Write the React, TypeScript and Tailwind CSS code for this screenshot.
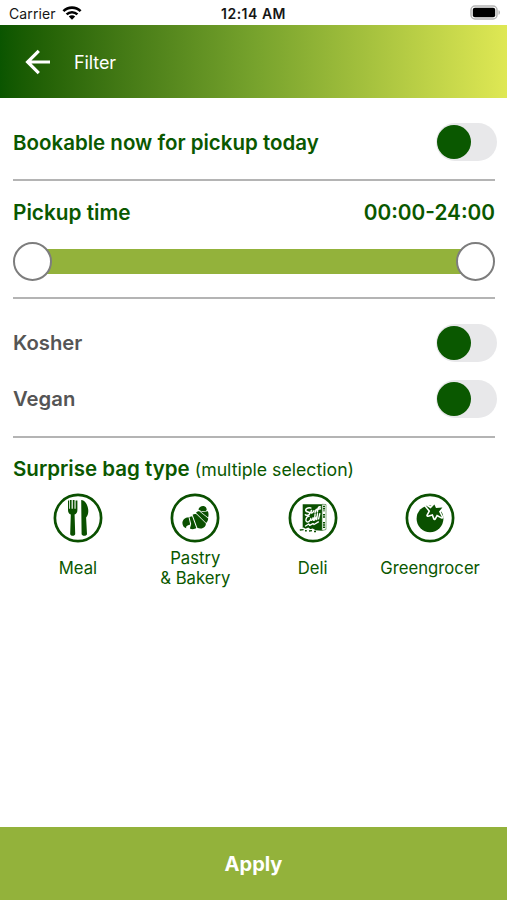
import { useState } from 'react';
import type { ReactNode } from 'react';

interface ToggleProps {
  label: string;
  checked: boolean;
  onChange: (value: boolean) => void;
}

function Toggle({ label, checked, onChange }: ToggleProps) {
  return (
    <button
      type="button"
      role="switch"
      aria-label={label}
      aria-checked={checked}
      onClick={() => onChange(!checked)}
      className={`flex h-[38px] w-[61px] items-center rounded-full bg-[#e8e8ea] px-px ${
        checked ? 'justify-end' : 'justify-start'
      }`}
    >
      <span className="h-[34px] w-[34px] rounded-full bg-[#0a5800]" />
    </button>
  );
}

function MealIcon() {
  return (
    <g fill="#0a5000">
      <path d="M15 7.5v9.4c0 2.7 1.2 4 2.8 4.5L17.2 41c0 2.4 5 2.4 5 0l-.6-19.6c1.6-.5 2.8-1.8 2.8-4.5V7.5h-1.8v8.2h-1.1V7h-1.7v8.7h-1.2V7h-1.7v8.7h-.8V7.5z" />
      <path d="M28.2 7c3.8 0 7.1 5.4 7.1 11 0 2.8-.8 5.2-2.2 6.6L34 41c0 2.4-5.4 2.4-5.4 0z" />
    </g>
  );
}

function PastryIcon() {
  return (
    <g fill="#0a5000">
      <path d="M18.6 24.2c-3.8.2-6.2 2.8-6.2 5.8 0 2.6 1.6 4.8 3.8 5.2-.3-1.4.2-2.4 1.4-2.8l2.6-.8z" />
      <path d="M19.4 24l2.7-.8 4.2 11.9c-1.6 1.4-5 1.5-6.4.4l1.3-4.6z" />
      <path d="M22.6 21.8c1.2-1 2.9-1.1 4.1-.4l9.2 9.2c.2 2.4-1.8 4.4-4.2 4.8-1.6.3-3.2.1-4.4-.6z" />
      <path d="M26 19.8c.6-1.1 1.9-1.7 3.2-1.6l9 7.4c-.1 1.9-.9 3.5-2 4.4z" />
      <path d="M28.4 16.4c.6-2 2.8-3.6 5.2-3.3 2 .2 3.1 1.7 3.1 3.9l-1 1-4.1.2z" />
      <path d="M29.9 17.9l2.4 1.2 5.6-.9c.8 1.8.8 4.4.2 6.4z" />
    </g>
  );
}

function DeliIcon() {
  return (
    <g>
      <path d="M14.7 11.2h19.2v26.6l-19.2-1.6z" fill="#0a5000" />
      <path d="M34 11.3l4 .2v25L34 37.6z" fill="#fff" stroke="#0a5000" strokeWidth=".5" />
      <path d="M36 12.8v5.5M36 21v4M36 29v6" stroke="#0a5000" strokeWidth="2" strokeDasharray="1.4 .9" />
      <g fill="none" stroke="#fff" strokeLinecap="round" strokeLinejoin="round">
        <path
          d="M22.8 15c-3-.8-5.7.8-4.9 2.9.8 1.7 4.3.3 3.8 2.6-.4 1.7-2.9 2.5-4.3 1.2M23.5 17.5c-1.7 2.8.8 3.7 2.4.3M27 19.5l1.2-3 2-.4M29.4 19c.2-4 1.5-5.6 3-5M28.8 16.6l3.6-.8"
          strokeWidth="1.5"
        />
        <path
          d="M21 23.4c-3-.2-4.5 5.5-1.4 5.6 1.2 0 1.8-.8 2.4-1.7M22.8 25.4c-.6 3 1.8 2.5 2.3-.7l.6 2.6M27.1 21l-.6 6 2.2-3.2M29.5 20.7l-.8 5.8M31.8 20.6l-1.2 5.2M17.5 33l3.2-2 1 1.4 3.3-1.8 1 .9 4.4-2.6"
          strokeWidth="1.4"
        />
      </g>
      <path d="M12.2 36.7l3.2-1.1 1.8 1.2 3-1.2 2 1.6 2.4-.8 2.2 1.4" fill="none" stroke="#fff" strokeWidth="1.8" />
      <path d="M11.8 37l3.8-.4M17 37.7h1.8M21 38l3-.4M26 38.5h2" stroke="#0a5000" strokeWidth="1.4" />
    </g>
  );
}

function TomatoIcon() {
  return (
    <g>
      <circle cx="25" cy="25.8" r="13.4" fill="#0a5000" />
      <path
        d="M20.6 12.2l5 3.2 3.8-4 1.6 3.6 6.4-.4-3.4 4 2.8 5.6-5-2.6-2.2 4-1.8-4.6-5 1.4 2.4-4.4z"
        fill="#fff"
        stroke="#fff"
        strokeWidth="3.2"
        strokeLinejoin="round"
      />
      <path
        d="M20.6 12.2l5 3.2 3.8-4 1.6 3.6 6.4-.4-3.4 4 2.8 5.6-5-2.6-2.2 4-1.8-4.6-5 1.4 2.4-4.4z"
        fill="#0a5000"
      />
    </g>
  );
}

const BAG_TYPES: { id: string; lines: string[]; icon: ReactNode }[] = [
  { id: 'meal', lines: ['Meal'], icon: <MealIcon /> },
  { id: 'pastry', lines: ['Pastry', '& Bakery'], icon: <PastryIcon /> },
  { id: 'deli', lines: ['Deli'], icon: <DeliIcon /> },
  { id: 'greengrocer', lines: ['Greengrocer'], icon: <TomatoIcon /> },
];

function StatusBar() {
  return (
    <div className="grid h-[25px] grid-cols-3 items-center bg-white pt-[3px] text-[#161616]">
      <div className="flex items-center gap-[6px] pl-[9px]">
        <span className="text-[14px] leading-none tracking-[0.1px]">Carrier</span>
        <svg width="20" height="14" viewBox="0 0 20 14" className="-mt-[3px]">
          <g fill="none" stroke="#000" strokeWidth="2.6">
            <path d="M1.4 5.2a12.2 12.2 0 0 1 17.2 0" />
            <path d="M4.6 8.4a7.7 7.7 0 0 1 10.8 0" />
          </g>
          <path d="M10 13.8L6.8 10.6a4.6 4.6 0 0 1 6.4 0z" />
        </svg>
      </div>
      <span className="text-center text-[14px] leading-none font-semibold tracking-[0.5px]">12:14 AM</span>
      <div className="flex justify-end pr-[6px]">
        <svg width="31" height="15" viewBox="0 0 31 15" className="-mt-[3px]">
          <rect x="1" y="1" width="26" height="13" rx="4" fill="#fff" stroke="#b5b5b5" strokeWidth="1.5" />
          <rect x="2.8" y="2.8" width="22.4" height="9.4" rx="2" fill="#000" />
          <path d="M28.5 5.2c1.9.5 1.9 4.1 0 4.6z" fill="#b0b0b0" />
        </svg>
      </div>
    </div>
  );
}

export default function App() {
  const [bookableNow, setBookableNow] = useState(false);
  const [kosher, setKosher] = useState(false);
  const [vegan, setVegan] = useState(false);

  return (
    <div className="flex h-[900px] w-[507px] flex-col overflow-hidden bg-white font-['Inter',sans-serif] text-[#0a5800]">
      <StatusBar />

      <header className="flex h-[73.4px] items-center bg-linear-to-r from-[#0a5500] via-[#76a22c] to-[#dfe854] pl-[25px] text-white">
        <svg width="26" height="26" viewBox="0 0 26 26" fill="none" stroke="#fff" strokeWidth="3.2">
          <path d="M13.8 1.8L2.6 13l11.2 11.2M2.5 13H25" />
        </svg>
        <h1 className="ml-[23px] pt-[1px] text-[18px] tracking-[-0.1px]">Filter</h1>
      </header>

      <main className="flex-1">
        <div className="ml-[13px] mr-[12px]">
          {/* Bookable now */}
          <section className="-mr-[2px] flex h-[81.1px] items-center justify-between pt-[6px]">
            <h2 className="pt-[2px] text-[20.5px] font-semibold">Bookable now for pickup today</h2>
            <Toggle label="Bookable now" checked={bookableNow} onChange={setBookableNow} />
          </section>

          {/* Pickup time */}
          <section className="h-[119.5px] border-y-2 border-[#b4b4b4]">
            <div className="flex h-[60px] items-center justify-between pt-[2px] text-[20.8px] font-semibold">
              <h2>Pickup time</h2>
              <span>00:00-24:00</span>
            </div>
            <div className="flex h-[40px] items-center">
              <span className="z-10 h-[39px] w-[39px] shrink-0 rounded-full border-2 border-[#7d7d7d] bg-white" />
              <span className="-mx-[5px] h-[25px] flex-1 bg-[#93b23b]" />
              <span className="z-10 h-[39px] w-[39px] shrink-0 rounded-full border-2 border-[#7d7d7d] bg-white" />
            </div>
          </section>

          {/* Diet */}
          <section className="h-[139px] border-b-2 border-[#b4b4b4] pt-[16px] text-[20.3px] font-semibold text-[#555]">
            <div className="-mr-[2px] flex h-[56px] items-center justify-between">
              <h2>Kosher</h2>
              <Toggle label="Kosher" checked={kosher} onChange={setKosher} />
            </div>
            <div className="-mr-[2px] flex h-[56px] items-center justify-between">
              <h2>Vegan</h2>
              <Toggle label="Vegan" checked={vegan} onChange={setVegan} />
            </div>
          </section>

          <h2 className="flex h-[55px] items-baseline pt-[16px] text-[20.5px] font-semibold">
            Surprise bag type
            <span className="ml-[5px] text-[17.7px] font-normal">(multiple selection)</span>
          </h2>
        </div>

        {/* Bag types */}
        <div className="ml-[19.2px] mr-[18.2px] grid grid-cols-4">
          {BAG_TYPES.map((type) => (
            <button type="button" key={type.id} className="flex flex-col items-center">
              <svg width="50" height="50" viewBox="0 0 50 50">
                <circle cx="25" cy="25" r="23.1" fill="#fff" stroke="#0a5000" strokeWidth="2.7" />
                {type.icon}
              </svg>
              <span className="flex h-[50px] flex-col justify-center text-[16.7px] leading-[20px]">
                {type.lines.map((line) => (
                  <span key={line}>{line}</span>
                ))}
              </span>
            </button>
          ))}
        </div>
      </main>

      <button type="button" className="h-[73px] bg-[#93b23b] text-[20px] font-bold text-white">
        Apply
      </button>
    </div>
  );
}
